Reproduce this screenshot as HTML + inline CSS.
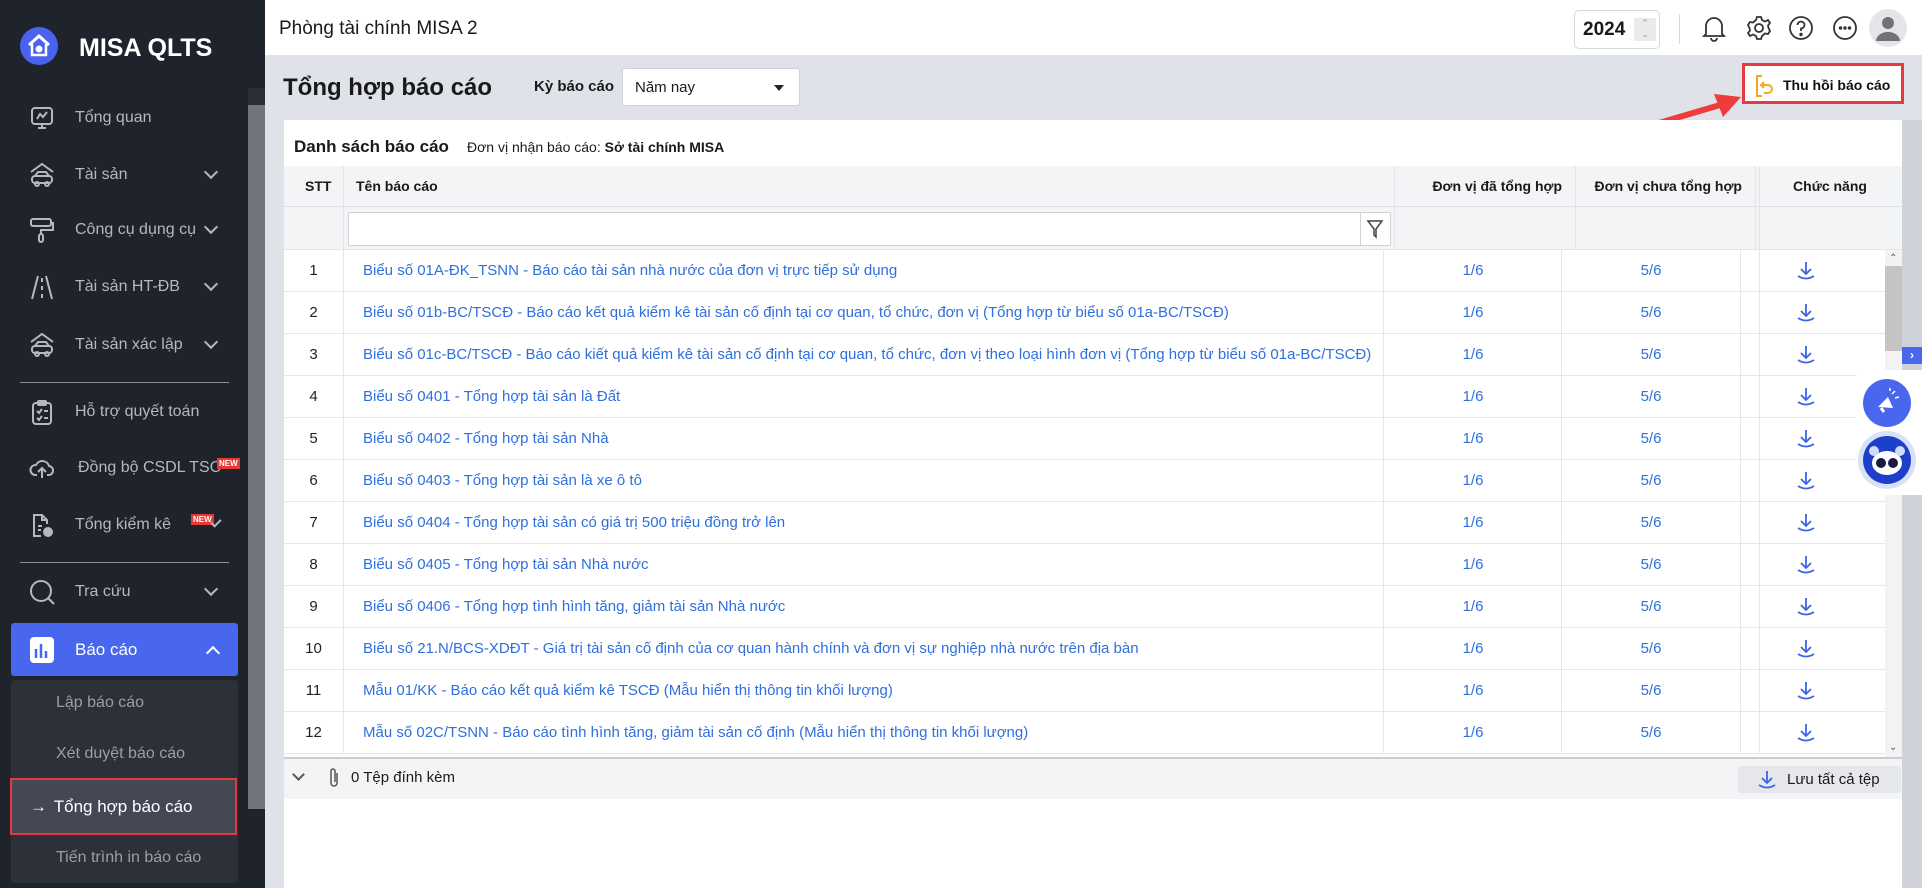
<!DOCTYPE html>
<html><head><meta charset="utf-8">
<style>
*{box-sizing:border-box;margin:0;padding:0}
body{width:1922px;height:888px;overflow:hidden;font-family:"Liberation Sans","Noto Sans CJK SC",sans-serif;background:#dfe2e8;position:relative;color:#1a1a1a}
.abs{position:absolute}
#side{left:0;top:0;width:265px;height:888px;background:#1f232b}
.mi{position:absolute;left:0;width:248px;height:40px;color:#b4b8bf;font-size:16px;display:flex;align-items:center}
.mi .ic{position:absolute;left:29px;top:7px;width:26px;height:26px}
.mi .t{position:absolute;left:75px}
.mi .ch{position:absolute;left:206px;width:10px;height:10px;border-right:2px solid #b4b8bf;border-bottom:2px solid #b4b8bf;transform:rotate(45deg);top:12px}
.sub{position:absolute;left:56px;color:#9a9ea6;font-size:16px}
.hr{position:absolute;left:20px;width:209px;height:1px;background:#8a8e95}
#hdr{left:265px;top:0;width:1657px;height:55px;background:#fff}
.row{position:absolute;left:284px;width:1601px;height:42px;border-bottom:1px solid #e4e6ea;background:#fff;font-size:15px}
.row span{position:absolute;top:12px}
.c1{left:0;width:59px;text-align:center;color:#222}
.c2{left:79px;color:#2f6fde;white-space:nowrap;overflow:hidden;width:1010px}
.c3{left:1099px;width:180px;text-align:center;color:#2f6fde}
.c4{left:1277px;width:180px;text-align:center;color:#2f6fde}
.vl{position:absolute;top:0;width:1px;height:42px;background:#e4e6ea}
.dl{position:absolute;left:1512px;top:11px}
</style></head><body>
<div id="side" class="abs">
  <svg class="abs" style="left:19px;top:26px" width="40" height="40" viewBox="0 0 40 40"><circle cx="20" cy="20" r="19" fill="#4a63ef"/><path d="M10 19 L20 10 L30 19" stroke="#fff" stroke-width="3" fill="none"/><path d="M13 18 V29 H27 V18" stroke="#fff" stroke-width="2.5" fill="none"/><circle cx="20" cy="23" r="3.5" fill="#fff"/></svg>
  <div class="abs" style="left:79px;top:34px;color:#fff;font-size:25px;font-weight:bold">MISA QLTS</div>
  <div class="abs" style="left:248px;top:88px;width:17px;height:721px;background:#70757e"></div>
  <div class="abs" style="left:248px;top:88px;width:17px;height:17px;background:#2a2e35"></div>

  <div class="mi" style="top:98px"><svg class="ic" viewBox="0 0 26 26" fill="none" stroke="#b4b8bf" stroke-width="2"><rect x="3" y="3" width="20" height="16" rx="3"/><path d="M8 14 L11 9 L14 12 L18 7 M13 19 V23 M9 23 H17"/></svg><span class="t">Tổng quan</span></div>
  <div class="mi" style="top:155px"><svg class="ic" viewBox="0 0 26 26" fill="none" stroke="#b4b8bf" stroke-width="2"><path d="M2 10 L13 2 L24 10"/><rect x="3" y="14" width="20" height="7" rx="3"/><path d="M6 14 L9 10 H17 L20 14"/><circle cx="8" cy="22" r="2"/><circle cx="18" cy="22" r="2"/></svg><span class="t">Tài sản</span><i class="ch"></i></div>
  <div class="mi" style="top:210px"><svg class="ic" viewBox="0 0 26 26" fill="none" stroke="#b4b8bf" stroke-width="2"><rect x="2" y="2" width="20" height="7" rx="2"/><path d="M22 6 H24 V13 H12 V17"/><rect x="10" y="17" width="4" height="8" rx="2"/></svg><span class="t">Công cụ dụng cụ</span><i class="ch"></i></div>
  <div class="mi" style="top:267px"><svg class="ic" viewBox="0 0 26 26" fill="none" stroke="#b4b8bf" stroke-width="2"><path d="M9 2 L3 25 M17 2 L23 25 M13 4 V8 M13 12 V16 M13 20 V24"/></svg><span class="t">Tài sản HT-ĐB</span><i class="ch"></i></div>
  <div class="mi" style="top:325px"><svg class="ic" viewBox="0 0 26 26" fill="none" stroke="#b4b8bf" stroke-width="2"><path d="M2 10 L13 2 L24 10"/><rect x="3" y="14" width="20" height="7" rx="3"/><path d="M6 14 L9 10 H17 L20 14"/><circle cx="8" cy="22" r="2"/><circle cx="18" cy="22" r="2"/></svg><span class="t">Tài sản xác lập</span><i class="ch"></i></div>
  <div class="hr" style="top:382px"></div>
  <div class="mi" style="top:392px"><svg class="ic" viewBox="0 0 26 26" fill="none" stroke="#b4b8bf" stroke-width="2"><rect x="4" y="4" width="18" height="21" rx="3"/><rect x="9" y="2" width="8" height="4" rx="1"/><path d="M8 12 L10 14 L13 10 M15 12 H19 M8 19 L10 21 L13 17 M15 19 H19"/></svg><span class="t">Hỗ trợ quyết toán</span></div>
  <div class="mi" style="top:448px"><svg class="ic" viewBox="0 0 26 26" fill="none" stroke="#b4b8bf" stroke-width="2"><path d="M8 20 H6 A5 5 0 0 1 7 10 A7 7 0 0 1 20 11 A4.5 4.5 0 0 1 19 20 H18 M13 23 V13 M9 17 L13 13 L17 17"/></svg><span class="t" style="left:78px">Đồng bộ CSDL TSC</span><span class="abs" style="left:217px;top:10px;background:#e53935;color:#fff;font-size:8px;font-weight:bold;padding:1px 2px;line-height:9px">NEW</span></div>
  <div class="mi" style="top:505px"><svg class="ic" viewBox="0 0 26 26" fill="none" stroke="#b4b8bf" stroke-width="2"><path d="M18 12 V8 L13 3 H5 V24 H12 M13 3 V8 H18 M9 14 H13 M9 18 H12"/><circle cx="19" cy="20" r="4" fill="#b4b8bf"/></svg><span class="t">Tổng kiểm kê</span><span class="abs" style="left:191px;top:9px;background:#e53935;color:#fff;font-size:8px;font-weight:bold;padding:1px 2px;line-height:9px">NEW</span><i class="abs" style="left:213px;top:12px;width:6px;height:10px;border-right:2px solid #b4b8bf;border-bottom:2px solid #b4b8bf;transform:rotate(45deg)"></i></div>
  <div class="hr" style="top:562px"></div>
  <div class="mi" style="top:572px"><svg class="ic" viewBox="0 0 26 26" fill="none" stroke="#b4b8bf" stroke-width="2"><circle cx="12" cy="12" r="10"/><path d="M19 19 L25 25"/></svg><span class="t">Tra cứu</span><i class="ch"></i></div>
  <div class="abs" style="left:11px;top:623px;width:227px;height:53px;background:#4866ee;border-radius:3px"></div>
  <svg class="abs" style="left:30px;top:637px" width="24" height="26" viewBox="0 0 24 26"><rect width="24" height="26" rx="4" fill="#fff"/><path d="M6 12 V21 M11 7 V21 M16 14 V21" stroke="#4866ee" stroke-width="2.5"/></svg>
  <div class="abs" style="left:75px;top:640px;color:#fff;font-size:17px">Báo cáo</div>
  <i class="abs" style="left:208px;top:648px;width:10px;height:10px;border-left:2.5px solid #fff;border-top:2.5px solid #fff;transform:rotate(45deg)"></i>
  <div class="abs" style="left:11px;top:680px;width:227px;height:203px;background:#2c3039;border-radius:4px"></div>
  <div class="sub" style="top:694px">Lập báo cáo</div>
  <div class="sub" style="top:745px">Xét duyệt báo cáo</div>
  <div class="abs" style="left:10px;top:778px;width:227px;height:57px;background:#444855;border:2px solid #e5393b"></div>
  <div class="abs" style="left:30px;top:797px;color:#fff;font-size:17px">→ <span style="margin-left:2px">Tổng hợp báo cáo</span></div>
  <div class="sub" style="top:849px">Tiến trình in báo cáo</div>
</div>

<div id="hdr" class="abs">
  <div class="abs" style="left:14px;top:18px;font-size:19px;color:#1a1a1a">Phòng tài chính MISA 2</div>
  <div class="abs" style="left:1309px;top:10px;width:86px;height:39px;border:1px solid #d5d8dd;border-radius:5px"></div>
  <div class="abs" style="left:1318px;top:19px;font-size:19px;font-weight:bold">2024</div>
  <div class="abs" style="left:1369px;top:18px;width:22px;height:23px;background:#e9eaec;color:#999;font-size:9px;text-align:center;line-height:11px">⌃<br>⌄</div>
  <div class="abs" style="left:1414px;top:14px;width:1px;height:30px;background:#d5d8dd"></div>
  <svg class="abs" style="left:1436px;top:14px" width="26" height="28" viewBox="0 0 26 28" fill="none" stroke="#333" stroke-width="1.8"><path d="M5 20 V12 A8 8 0 0 1 21 12 V20 L23 22 H3 Z M10 24 A3 3 0 0 0 16 24"/></svg>
  <svg class="abs" style="left:1481px;top:15px" width="26" height="26" viewBox="0 0 26 26" fill="none" stroke="#333" stroke-width="1.8"><circle cx="13" cy="13" r="4"/><path d="M11 2 H15 L16 5 L19 6.5 L22 5 L24 8 L22 10.5 L22.5 13 L24 16 L22 19 L19 18.5 L16 21 L15 24 H11 L10 21 L7 19.5 L4 21 L2 18 L4 15.5 L3.5 13 L2 10 L4 7 L7 7.5 L10 5 Z"/></svg>
  <svg class="abs" style="left:1523px;top:15px" width="26" height="26" viewBox="0 0 26 26" fill="none" stroke="#333" stroke-width="1.8"><circle cx="13" cy="13" r="11"/><path d="M9.5 10 A3.5 3.5 0 1 1 13 13.5 V16"/><circle cx="13" cy="19.5" r="0.8" fill="#333"/></svg>
  <svg class="abs" style="left:1567px;top:15px" width="26" height="26" viewBox="0 0 26 26" fill="none" stroke="#333" stroke-width="1.8"><circle cx="13" cy="13" r="11"/><circle cx="8.5" cy="13" r="0.8" fill="#333"/><circle cx="13" cy="13" r="0.8" fill="#333"/><circle cx="17.5" cy="13" r="0.8" fill="#333"/></svg>
  <svg class="abs" style="left:1603px;top:8px" width="40" height="40" viewBox="0 0 40 40"><circle cx="20" cy="20" r="19" fill="#e4e5e7"/><circle cx="20" cy="15" r="6" fill="#707278"/><path d="M8 33 A12 9 0 0 1 32 33 Z" fill="#707278"/></svg>
</div>

<div class="abs" style="left:283px;top:74px;font-size:24px;font-weight:bold">Tổng hợp báo cáo</div>
<div class="abs" style="left:534px;top:78px;font-size:15px;font-weight:bold">Kỳ báo cáo</div>
<div class="abs" style="left:622px;top:68px;width:178px;height:38px;background:#fff;border:1px solid #cfd3d8;border-radius:3px"></div>
<div class="abs" style="left:635px;top:79px;font-size:15px">Năm nay</div>
<div class="abs" style="left:774px;top:85px;border-left:5px solid transparent;border-right:5px solid transparent;border-top:6px solid #222"></div>

<div class="abs" style="left:1744px;top:65px;width:158px;height:37px;background:#fff;border-radius:3px"></div>
<div class="abs" style="left:1742px;top:63px;width:162px;height:41px;border:3px solid #e53b3e"></div>
<svg class="abs" style="left:1754px;top:74px" width="20" height="24" viewBox="0 0 20 24" fill="none" stroke="#f4a81e" stroke-width="2"><path d="M8 2 H3 V22 H8 M7 11 H14 A4 4 0 0 1 14 19 H10 M10 8 L7 11 L10 14"/></svg>
<div class="abs" style="left:1783px;top:77px;font-size:14px;font-weight:bold;color:#111">Thu hồi báo cáo</div>
<svg class="abs" style="left:1630px;top:88px" width="120" height="50" viewBox="0 0 120 50"><path d="M12 40 L90 17" stroke="#ee3b3b" stroke-width="6" stroke-linecap="round"/><path d="M111 9 L84 6 L93 29 Z" fill="#ee3b3b"/></svg>

<div class="abs" style="left:284px;top:120px;width:1618px;height:768px;background:#fff"></div>
<div class="abs" style="left:294px;top:137px;font-size:17px;font-weight:bold">Danh sách báo cáo</div>
<div class="abs" style="left:467px;top:139px;font-size:14px">Đơn vị nhận báo cáo: <b>Sở tài chính MISA</b></div>

<div class="abs" style="left:284px;top:166px;width:1618px;height:84px;background:#f3f4f5;border-bottom:1px solid #e4e6ea"></div>
<div class="abs" style="left:284px;top:206px;width:1618px;height:1px;background:#dfe1e5"></div>
<div class="abs" style="left:343px;top:166px;width:1px;height:84px;background:#e2e4e8"></div>
<div class="abs" style="left:1394px;top:166px;width:1px;height:84px;background:#e2e4e8"></div>
<div class="abs" style="left:1575px;top:166px;width:1px;height:84px;background:#e2e4e8"></div>
<div class="abs" style="left:1755px;top:166px;width:1px;height:84px;background:#e2e4e8"></div>
<div class="abs" style="left:1759px;top:166px;width:1px;height:84px;background:#e2e4e8"></div>
<div class="abs" style="left:305px;top:178px;font-size:14px;font-weight:bold">STT</div>
<div class="abs" style="left:356px;top:178px;font-size:14px;font-weight:bold">Tên báo cáo</div>
<div class="abs" style="left:1390px;top:178px;width:172px;text-align:right;font-size:14px;font-weight:bold">Đơn vị đã tổng hợp</div>
<div class="abs" style="left:1570px;top:178px;width:172px;text-align:right;font-size:14px;font-weight:bold">Đơn vị chưa tổng hợp</div>
<div class="abs" style="left:1760px;top:178px;width:140px;text-align:center;font-size:14px;font-weight:bold">Chức năng</div>
<div class="abs" style="left:348px;top:212px;width:1043px;height:34px;background:#fff;border:1px solid #cfd2d7;border-radius:2px"></div>
<div class="abs" style="left:1360px;top:212px;width:1px;height:34px;background:#cfd2d7"></div>
<svg class="abs" style="left:1366px;top:219px" width="18" height="20" viewBox="0 0 18 20" fill="none" stroke="#444" stroke-width="1.5"><path d="M2 2 H16 L10 10 V18 L8 16 V10 Z"/></svg>

<div id="rows"></div>
<div class="abs" style="left:1885px;top:250px;width:17px;height:507px;background:#f3f3f3"></div>
<div class="abs" style="left:1885px;top:266px;width:17px;height:85px;background:#c4c4c4"></div>
<div class="abs" style="left:1889px;top:253px;font-size:10px;color:#555">⌃</div>
<div class="abs" style="left:1889px;top:742px;font-size:10px;color:#555">⌄</div>

<div class="abs" style="left:284px;top:757px;width:1618px;height:42px;background:#f3f4f5;border-top:2px solid #c9ccd1"></div>
<i class="abs" style="left:294px;top:770px;width:9px;height:9px;border-right:2px solid #555;border-bottom:2px solid #555;transform:rotate(45deg)"></i>
<svg class="abs" style="left:328px;top:767px" width="12" height="22" viewBox="0 0 12 22" fill="none" stroke="#555" stroke-width="1.5"><path d="M9 6 V16 A3 3 0 0 1 3 16 V4 A2 2 0 0 1 7 4 V15"/></svg>
<div class="abs" style="left:351px;top:769px;font-size:15px">0 Tệp đính kèm</div>
<div class="abs" style="left:1738px;top:766px;width:163px;height:27px;background:#e6e7eb;border-radius:4px"></div>
<svg class="abs" style="left:1757px;top:770px" width="20" height="20" viewBox="0 0 20 20" fill="none" stroke="#3c63e8" stroke-width="1.8"><path d="M10 1 V12 M5 8 L10 13 L15 8 M2 15 Q10 20 18 15"/></svg>
<div class="abs" style="left:1787px;top:771px;font-size:15px">Lưu tất cả tệp</div>

<div class="abs" style="left:1902px;top:120px;width:20px;height:768px;background:#cfd3d9"></div>
<div class="abs" style="left:1902px;top:347px;width:20px;height:17px;background:#4866ee;color:#fff;font-size:12px;text-align:center;line-height:17px;font-weight:bold">›</div>
<div class="abs" style="left:1855px;top:370px;width:67px;height:125px;background:#fff;border-radius:12px 0 0 12px"></div>
<svg class="abs" style="left:1861px;top:377px" width="52" height="52" viewBox="0 0 52 52"><circle cx="26" cy="26" r="24" fill="#4866ee"/><path d="M17 30 L27 20 L32 31 Z" fill="#fff"/><path d="M20 31 L23 35" stroke="#fff" stroke-width="3"/><path d="M31 17 L34 14 M34 21 L38 20 M29 14 L29 11" stroke="#fff" stroke-width="1.5"/></svg>
<svg class="abs" style="left:1857px;top:430px" width="60" height="60" viewBox="0 0 60 60"><circle cx="30" cy="30" r="29" fill="#d7e1f7"/><circle cx="30" cy="30" r="24" fill="#1e3fc9"/><ellipse cx="30" cy="33" rx="15" ry="12" fill="#fff"/><circle cx="17" cy="21" r="5" fill="#d0dcf7"/><circle cx="43" cy="21" r="5" fill="#d0dcf7"/><circle cx="24" cy="33" r="5" fill="#1a1a40"/><circle cx="36" cy="33" r="5" fill="#1a1a40"/></svg>

<script>
var data=[
["1","Biểu số 01A-ĐK_TSNN - Báo cáo tài sản nhà nước của đơn vị trực tiếp sử dụng"],
["2","Biểu số 01b-BC/TSCĐ - Báo cáo kết quả kiểm kê tài sản cố định tại cơ quan, tổ chức, đơn vị (Tổng hợp từ biểu số 01a-BC/TSCĐ)"],
["3","Biểu số 01c-BC/TSCĐ - Báo cáo kiết quả kiểm kê tài sản cố định tại cơ quan, tổ chức, đơn vị theo loại hình đơn vị (Tổng hợp từ biểu số 01a-BC/TSCĐ)"],
["4","Biểu số 0401 - Tổng hợp tài sản là Đất"],
["5","Biểu số 0402 - Tổng hợp tài sản Nhà"],
["6","Biểu số 0403 - Tổng hợp tài sản là xe ô tô"],
["7","Biểu số 0404 - Tổng hợp tài sản có giá trị 500 triệu đồng trở lên"],
["8","Biểu số 0405 - Tổng hợp tài sản Nhà nước"],
["9","Biểu số 0406 - Tổng hợp tình hình tăng, giảm tài sản Nhà nước"],
["10","Biểu số 21.N/BCS-XDĐT - Giá trị tài sản cố định của cơ quan hành chính và đơn vị sự nghiệp nhà nước trên địa bàn"],
["11","Mẫu 01/KK - Báo cáo kết quả kiểm kê TSCĐ (Mẫu hiển thị thông tin khối lượng)"],
["12","Mẫu số 02C/TSNN - Báo cáo tình hình tăng, giảm tài sản cố định (Mẫu hiển thị thông tin khối lượng)"]];
var h="",dl='<svg class="dl" width="20" height="20" viewBox="0 0 20 20" fill="none" stroke="#3c63e8" stroke-width="1.8"><path d="M10 1 V12 M5 8 L10 13 L15 8 M2 15 Q10 20 18 15"/></svg>';
data.forEach(function(d,i){
 h+='<div class="row" style="top:'+(250+i*42)+'px"><span class="c1">'+d[0]+'</span><span class="c2">'+d[1]+'</span><span class="c3">1/6</span><span class="c4">5/6</span>'+
 '<i class="vl" style="left:59px"></i><i class="vl" style="left:1099px"></i><i class="vl" style="left:1277px"></i><i class="vl" style="left:1456px"></i><i class="vl" style="left:1475px"></i>'+dl+'</div>';
});
document.getElementById('rows').innerHTML=h;
</script>
</body></html>
